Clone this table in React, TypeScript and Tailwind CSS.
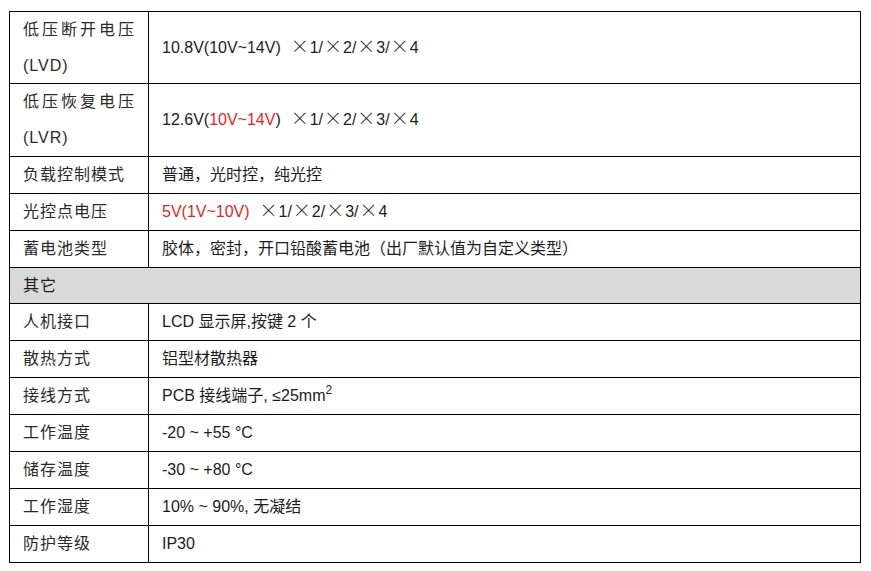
import React from 'react';

type Row = {
  label: React.ReactNode;
  value?: React.ReactNode;
  h: string;
  header?: boolean;
};

// the multiply sign in the doc is a wide full-width glyph
const X = () => (
  <span className="font-['Noto_Sans_CJK_SC',sans-serif] font-light text-[18px] leading-none px-[1px]">×</span>
);

const Mult = () => (
  <>
    <X />1/<X />2/<X />3/<X />4
  </>
);

const rows: Row[] = [
  {
    label: (
      <div className="flex flex-col leading-[36px]">
        <span className="tracking-[3px]">低压断开电压</span>
        <span>(LVD)</span>
      </div>
    ),
    value: <>10.8V(10V~14V)&nbsp;&nbsp;<Mult /></>,
    h: 'h-[72px]',
  },
  {
    label: (
      <div className="flex flex-col leading-[36px]">
        <span className="tracking-[3px]">低压恢复电压</span>
        <span>(LVR)</span>
      </div>
    ),
    value: (
      <>
        12.6V(<span className="text-[#f01c24]">10V~14V</span>)&nbsp;&nbsp;<Mult />
      </>
    ),
    h: 'h-[73px]',
  },
  { label: '负载控制模式', value: '普通，光时控，纯光控', h: 'h-[37px]' },
  {
    label: '光控点电压',
    value: (
      <>
        <span className="text-[#f01c24]">5V(1V~10V)</span>&nbsp;&nbsp;<Mult />
      </>
    ),
    h: 'h-[37px]',
  },
  { label: '蓄电池类型', value: '胶体，密封，开口铅酸蓄电池（出厂默认值为自定义类型）', h: 'h-[37px]' },
  { label: '其它', h: 'h-[36px]', header: true },
  { label: '人机接口', value: 'LCD 显示屏,按键 2 个', h: 'h-[37px]' },
  { label: '散热方式', value: '铝型材散热器', h: 'h-[37px]' },
  {
    label: '接线方式',
    value: (
      <>
        PCB 接线端子, ≤25mm<sup className="text-[12px] relative -top-[7px]">2</sup>
      </>
    ),
    h: 'h-[37px]',
  },
  { label: '工作温度', value: '-20 ~ +55 °C', h: 'h-[37px]' },
  { label: '储存温度', value: '-30 ~ +80 °C', h: 'h-[37px]' },
  { label: '工作湿度', value: '10% ~ 90%, 无凝结', h: 'h-[37px]' },
  { label: '防护等级', value: 'IP30', h: 'h-[37px]' },
];

export default function App() {
  return (
    <div className="w-[871px] h-[571px] bg-white pt-[11px] pl-[9px] font-['Liberation_Sans','Noto_Sans_CJK_SC',sans-serif] text-[16px] text-[#1c1c1c]">
      <div className="w-[852px] border-t border-l border-black">
        {rows.map((row, i) =>
          row.header ? (
            <div key={i} className={`${row.h} flex items-center border-b border-r border-black bg-[#d9d9d9] pl-[13px] tracking-[1px]`}>
              {row.label}
            </div>
          ) : (
            <div key={i} className={`${row.h} flex`}>
              <div className="w-[139px] flex items-center border-b border-r border-black pl-[13px] tracking-[1px] text-[#2a2a2a]">
                {row.label}
              </div>
              <div className="flex-1 flex items-center border-b border-r border-black pl-[13px]">
                <span>{row.value}</span>
              </div>
            </div>
          )
        )}
      </div>
    </div>
  );
}
